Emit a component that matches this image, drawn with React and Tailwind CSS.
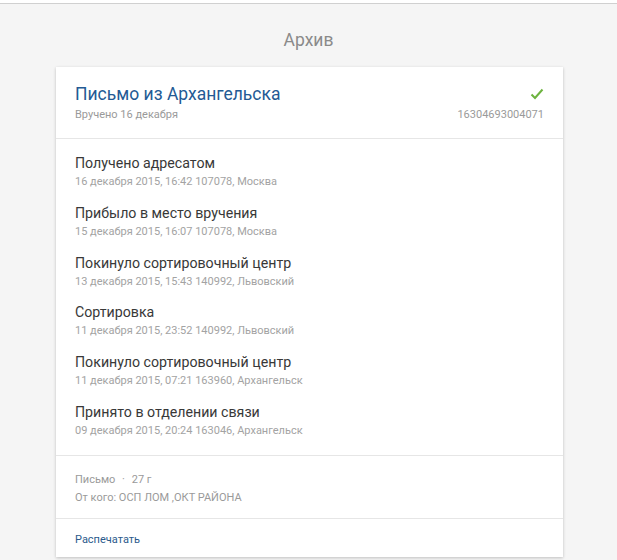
import React from "react";

const events = [
  { title: "Получено адресатом", sub: "16 декабря 2015, 16:42 107078, Москва" },
  { title: "Прибыло в место вручения", sub: "15 декабря 2015, 16:07 107078, Москва" },
  { title: "Покинуло сортировочный центр", sub: "13 декабря 2015, 15:43 140992, Львовский" },
  { title: "Сортировка", sub: "11 декабря 2015, 23:52 140992, Львовский" },
  { title: "Покинуло сортировочный центр", sub: "11 декабря 2015, 07:21 163960, Архангельск" },
  { title: "Принято в отделении связи", sub: "09 декабря 2015, 20:24 163046, Архангельск" },
];

export default function App() {
  return (
    <div className="min-h-[560px] bg-white pt-[3px] font-['Roboto','Liberation_Sans',sans-serif]">
      <div className="min-h-[557px] border-t border-[#d0d0d0] bg-[#f5f5f5]">
        <h1 className="pt-[24px] text-center text-[17.5px] leading-[24px] text-[#8a8a8a]">Архив</h1>

        <div className="ml-[56px] mt-[15px] w-[507px] bg-white shadow-[0_1px_3px_rgba(0,0,0,0.22)]">
          {/* Header */}
          <div className="flex justify-between border-b border-[#e6e6e6] px-[19px] pt-[16px] pb-[16px]">
            <div>
              <div className="text-[17.5px] leading-[22px] text-[#235a94]">Письмо из Архангельска</div>
              <div className="mt-[2px] text-[11px] leading-[15px] text-[#9a9a9a]">Вручено 16 декабря</div>
            </div>
            <div className="flex flex-col items-end">
              <svg width="14" height="12" viewBox="0 0 14 12" className="mt-[5px]">
                <path d="M1.5 6.5 L5 10 L12.5 1.5" fill="none" stroke="#6db33f" strokeWidth="2" />
              </svg>
              <div className="mt-[7px] text-[11px] leading-[15px] text-[#9a9a9a]">16304693004071</div>
            </div>
          </div>

          {/* Events */}
          <div className="border-b border-[#e6e6e6] px-[19px] pt-[14px] pb-[3px]">
            {events.map((e, i) => (
              <div key={i} className="h-[49.8px]">
                <div className="text-[14.2px] leading-[20px] text-[#383838]">{e.title}</div>
                <div className="text-[11px] leading-[18px] text-[#a3a3a3]">{e.sub}</div>
              </div>
            ))}
          </div>

          {/* Info */}
          <div className="border-b border-[#e6e6e6] px-[19px] pt-[15px] pb-[11px] text-[11px] leading-[18px] text-[#9a9a9a]">
            <div>
              Письмо <span className="mx-[4px]">·</span> 27 г
            </div>
            <div>От кого: ОСП ЛОМ ,ОКТ РАЙОНА</div>
          </div>

          {/* Print */}
          <div className="px-[19px] pt-[13px] pb-[9px] text-[11px] leading-[16px] text-[#2b5a8c]">Распечатать</div>
        </div>
      </div>
    </div>
  );
}
